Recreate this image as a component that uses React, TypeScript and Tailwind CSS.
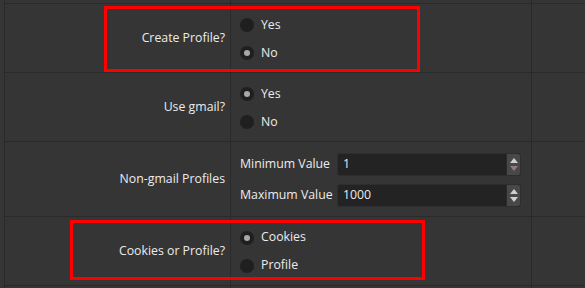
import React from "react";

const LINE = "border-[#2a2a2a]";

function Radio({ checked, label }: { checked?: boolean; label: string }) {
  return (
    <div className="flex items-center h-[28px] gap-[7px]">
      <span className="w-[14px] h-[14px] rounded-full bg-[#1f1f1f] flex items-center justify-center">
        {checked && <span className="w-[6px] h-[6px] rounded-full bg-[#a8a8a8]" />}
      </span>
      <span>{label}</span>
    </div>
  );
}

function Spin({ value, downDisabled }: { value: string; downDisabled?: boolean }) {
  return (
    <div className="w-[184px] h-[23px] rounded-[3px] bg-[#232323] border border-[#2e2e2e] flex items-stretch">
      <div className="flex-1 flex items-center pl-[5px]">{value}</div>
      <div className="w-[14px] bg-[#484848] border-l border-[#2a2a2a] rounded-r-[2px] flex flex-col items-center justify-center gap-[3px]">
        <svg width="8" height="5" viewBox="0 0 8 5">
          <path d="M0 5 L4 0 L8 5 Z" fill="#d0d0d0" />
        </svg>
        <svg width="8" height="5" viewBox="0 0 8 5">
          <path d="M0 0 L4 5 L8 0 Z" fill={downDisabled ? "#8e7a8a" : "#d0d0d0"} />
        </svg>
      </div>
    </div>
  );
}

function Row({
  h,
  label,
  children,
}: {
  h: string;
  label?: string;
  children?: React.ReactNode;
}) {
  return (
    <div className={`flex border-t ${LINE} ${h}`}>
      <div className={`w-[226px] shrink-0 border-l ${LINE} flex items-center justify-end pr-[5px]`}>
        {label}
      </div>
      <div className={`w-[301px] shrink-0 border-l ${LINE} pl-[9px] flex flex-col justify-center`}>
        {children}
      </div>
      <div className={`flex-1 border-l ${LINE}`} />
    </div>
  );
}

export default function App() {
  return (
    <div
      className="relative w-[585px] h-[288px] overflow-hidden bg-[#353535] text-[#ececec] text-[12.3px]"
      style={{ fontFamily: '"Open Sans", "Noto Sans", sans-serif' }}
    >
      <div className="ml-[4px] flex flex-col h-full">
        <div className="flex h-[3px]">
          <div className={`w-[226px] shrink-0 border-l ${LINE}`} />
          <div className={`w-[301px] shrink-0 border-l ${LINE}`} />
          <div className={`flex-1 border-l ${LINE}`} />
        </div>
        <Row h="h-[69px]" label="Create Profile?">
          <div className="pt-[2px]">
            <Radio label="Yes" />
            <Radio label="No" checked />
          </div>
        </Row>
        <Row h="h-[69px]" label="Use gmail?">
          <div className="pt-[2px]">
            <Radio label="Yes" checked />
            <Radio label="No" />
          </div>
        </Row>
        <Row h="h-[75px]" label="Non-gmail Profiles">
          <div className="flex flex-col gap-[8px] pt-[1px]">
            <div className="flex items-center">
              <span className="w-[97px]">Minimum Value</span>
              <Spin value="1" downDisabled />
            </div>
            <div className="flex items-center">
              <span className="w-[97px]">Maximum Value</span>
              <Spin value="1000" />
            </div>
          </div>
        </Row>
        <Row h="h-[69px]" label="Cookies or Profile?">
          <div className="pt-[1px]">
            <Radio label="Cookies" checked />
            <Radio label="Profile" />
          </div>
        </Row>
        <Row h="flex-1" />
      </div>

      <div className="absolute left-[104px] top-[6px] w-[316px] h-[66px] border-[3px] border-[#ff0000]" />
      <div className="absolute left-[70px] top-[220px] w-[355px] h-[60px] border-[3px] border-[#ff0000]" />
    </div>
  );
}
